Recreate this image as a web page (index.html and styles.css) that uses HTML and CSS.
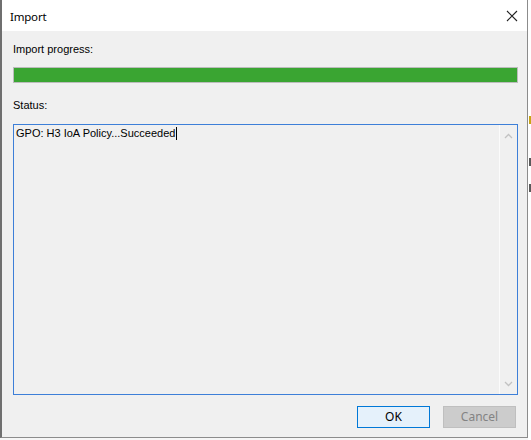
FILE: index.html
```html
<!DOCTYPE html>
<html>
<head>
<meta charset="utf-8">
<link rel="stylesheet" href="styles.css">
</head>
<body>
<div class="backdrop">
  <div class="window">
    <div class="titlebar">
      <span class="title">Import</span>
      <svg class="close" width="12" height="12" viewBox="0 0 12 12"><path d="M1 1 L11 11 M11 1 L1 11" stroke="#222" stroke-width="1.1" fill="none"/></svg>
    </div>
    <div class="content">
      <div class="label label-progress">Import progress:</div>
      <div class="progress"><div class="progress-fill"></div></div>
      <div class="label label-status">Status:</div>
      <div class="statusbox">
        <div class="statustext">GPO: H3 IoA Policy...Succeeded<span class="caret"></span></div>
        <div class="scrollbar">
          <svg width="9" height="6" viewBox="0 0 9 6"><path d="M1 5 L4.5 1.5 L8 5" stroke="#c2c2c2" stroke-width="1.3" fill="none"/></svg>
          <svg width="9" height="6" viewBox="0 0 9 6"><path d="M1 1 L4.5 4.5 L8 1" stroke="#c2c2c2" stroke-width="1.3" fill="none"/></svg>
        </div>
      </div>
      <div class="buttons">
        <div class="btn btn-ok">OK</div>
        <div class="btn btn-cancel">Cancel</div>
      </div>
    </div>
  </div>
  <div class="outside">
    <span class="o1"></span>
    <span class="o2"></span>
    <span class="o3"></span>
  </div>
</div>
</body>
</html>
```
FILE: styles.css
```css
html, body {
  margin: 0;
  padding: 0;
  background: #ffffff;
  font-family: "Liberation Sans", Arial, sans-serif;
  font-size: 11px;
  color: #000;
}
.backdrop {
  display: flex;
  width: 531px;
  height: 440px;
  overflow: hidden;
  background: #f6f6f6;
}
.window {
  width: 525px;
  height: 437px;
  border-left: 2px solid #6f6f6f;
  border-right: 1px solid #8c8c8c;
  border-bottom: 1px solid #8c8c8c;
  display: flex;
  flex-direction: column;
  flex: none;
  background: #f0f0f0;
}
.titlebar {
  height: 31px;
  background: #ffffff;
  display: flex;
  align-items: center;
  justify-content: space-between;
  padding: 0 9px 0 8px;
  flex: none;
}
.title {
  font-family: "Noto Sans", "Open Sans", sans-serif;
  font-size: 11.5px;
  margin-top: 1px;
  letter-spacing: -0.2px;
}
.close {
  margin-top: 1px;
}
.content {
  flex: 1;
  padding: 0 9px 0 11px;
  display: flex;
  flex-direction: column;
}
.label {
  height: 15px;
  line-height: 15px;
  font-size: 11px;
}
.label-progress { margin-top: 11px; }
.progress {
  margin-top: 10px;
  height: 14px;
  border: 1px solid #bcbcbc;
  background: #e6e6e6;
}
.progress-fill {
  height: 100%;
  width: 100%;
  background: #3aa532;
}
.label-status { margin-top: 15px; }
.statusbox {
  margin-top: 11px;
  height: 269px;
  border: 1px solid #3d7fd8;
  background: #f0f0f0;
  display: flex;
}
.statustext {
  flex: 1;
  padding: 1px 0 0 2px;
  font-size: 11px;
  line-height: 15px;
}
.caret {
  display: inline-block;
  width: 1px;
  height: 13px;
  background: #000;
  vertical-align: -3px;
  margin-left: 1px;
}
.scrollbar {
  width: 17px;
  border-left: 1px solid #fbfbfb;
  display: flex;
  flex-direction: column;
  align-items: center;
  justify-content: space-between;
  padding: 8px 0 7px;
}
.buttons {
  margin-top: 11px;
  display: flex;
  justify-content: flex-end;
  gap: 13px;
  padding-right: 2px;
}
.btn {
  width: 71px;
  height: 20px;
  line-height: 20px;
  text-align: center;
  font-size: 12px;
  font-family: "Noto Sans", "Open Sans", sans-serif;
}
.btn-ok {
  border: 1px solid #0078d7;
  background: #e5f1fb;
}
.btn-cancel {
  border: 1px solid #bfbfbf;
  background: #cccccc;
  color: #838383;
}
.outside {
  flex: 1;
  position: relative;
  background: #ffffff;
}
.outside span {
  position: absolute;
  left: 1px;
  width: 2px;
  height: 8px;
}
.o1 { top: 116px; background: #c9a514; }
.o2 { top: 158px; background: #5a5a5a; }
.o3 { top: 184px; background: #5a5a5a; }
```
